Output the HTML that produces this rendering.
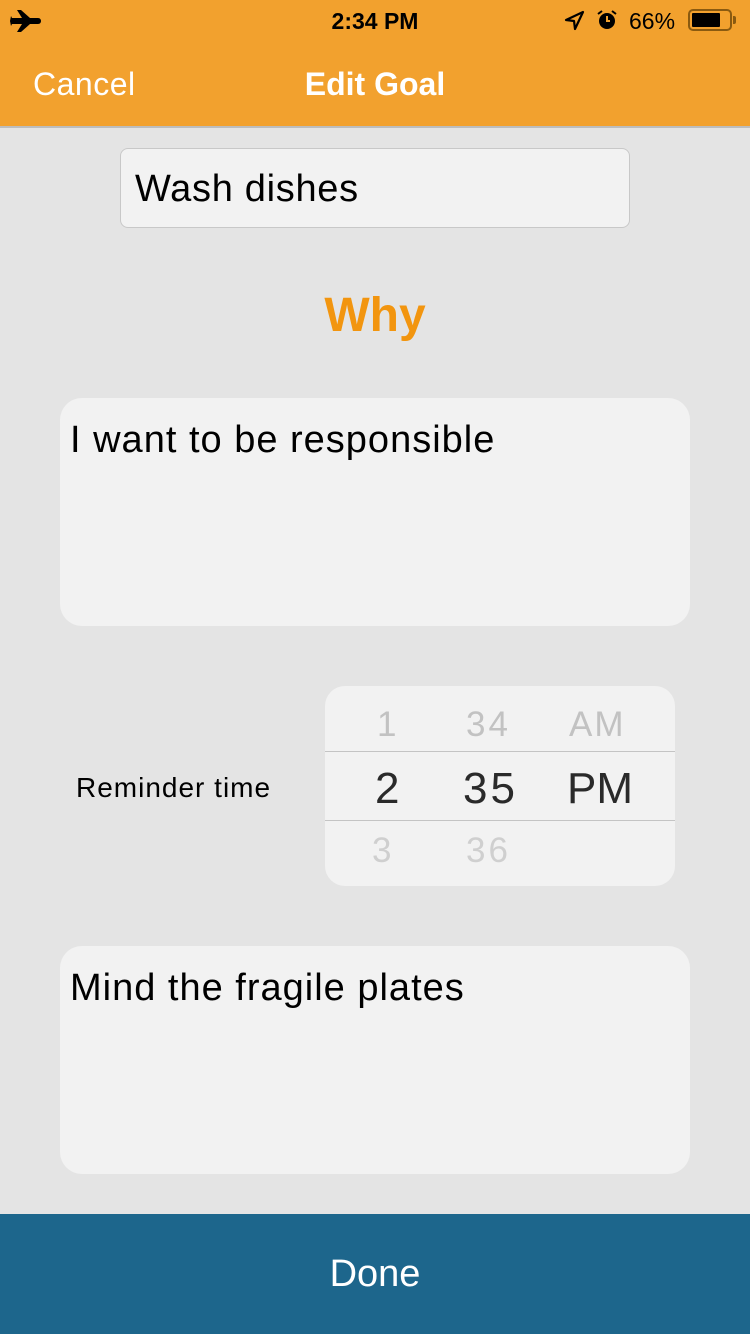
<!DOCTYPE html>
<html><head><meta charset="utf-8"><style>
*{margin:0;padding:0;box-sizing:border-box}
body{width:750px;height:1334px;background:#e4e4e4;font-family:"Liberation Sans",sans-serif;position:relative;overflow:hidden}
.abs{position:absolute}
.hdr{left:0;top:0;width:750px;height:128px;background:#f2a12e;border-bottom:2px solid #bdbdbd}
.box{background:#f2f2f2;border-radius:22px}
</style></head><body>
<div class="abs hdr">
  <svg class="abs" style="left:10px;top:8px" width="32" height="26" viewBox="0 0 32 26"><path d="M2 10h10L7 2h4l9 8h8c2 0 3 1.5 3 3s-1 3-3 3h-8l-9 8H7l5-8H2l-1 2-1-5 1-5z" fill="#000"/></svg>
  <div class="abs" style="left:0;width:750px;top:8px;text-align:center;font-size:23px;font-weight:bold;color:#000">2:34 PM</div>
  <svg class="abs" style="left:563px;top:10px" width="22" height="22" viewBox="0 0 22 22"><path d="M20 2L3 10l8 1 1 8z" fill="none" stroke="#000" stroke-width="2.2" stroke-linejoin="round"/></svg>
  <svg class="abs" style="left:596px;top:9px" width="22" height="22" viewBox="0 0 22 22"><circle cx="11" cy="12" r="8" fill="#000"/><path d="M11 7v5h3" stroke="#f2a12e" stroke-width="2" fill="none"/><path d="M2 5l4-3M20 5l-4-3" stroke="#000" stroke-width="2"/></svg>
  <div class="abs" style="left:629px;top:8px;font-size:23px;color:#000">66%</div>
  <div class="abs" style="left:688px;top:9px;width:44px;height:22px;border:2px solid #8a5a10;border-radius:5px"><div style="margin:2px;width:28px;height:14px;background:#000;border-radius:1px"></div></div>
  <div class="abs" style="left:733px;top:16px;width:3px;height:8px;background:#8a5a10;border-radius:0 2px 2px 0"></div>
  <div class="abs" style="left:33px;top:66px;font-size:32px;color:#fff;letter-spacing:0.5px">Cancel</div>
  <div class="abs" style="left:0;width:750px;top:66px;text-align:center;font-size:32px;font-weight:bold;color:#fff">Edit Goal</div>
</div>
<div class="abs" style="left:120px;top:148px;width:510px;height:80px;background:#f2f2f2;border:1px solid #c8c8c8;border-radius:8px;font-size:38px;padding:19px 0 0 14px;letter-spacing:0.7px">Wash dishes</div>
<div class="abs" style="left:0;width:750px;top:288px;text-align:center;font-size:48px;font-weight:bold;color:#f2950f">Why</div>
<div class="abs box" style="left:60px;top:398px;width:630px;height:228px;font-size:38px;padding:21px 0 0 10px;letter-spacing:1px">I want to be responsible</div>
<div class="abs" style="left:76px;top:772px;font-size:28px;letter-spacing:1px">Reminder time</div>
<div class="abs box" style="left:325px;top:686px;width:350px;height:200px;border-radius:20px">
  <div class="abs" style="left:0;top:65px;width:350px;height:1px;background:#c4c4c4"></div>
  <div class="abs" style="left:0;top:134px;width:350px;height:1px;background:#c4c4c4"></div>
  <div class="abs" style="left:52px;top:19px;font-size:35px;color:#c2c2c2">1</div>
  <div class="abs" style="left:141px;top:19px;font-size:35px;color:#c2c2c2;letter-spacing:3px">34</div>
  <div class="abs" style="left:244px;top:19px;font-size:35px;color:#c2c2c2;letter-spacing:2px">AM</div>
  <div class="abs" style="left:50px;top:78px;font-size:44px;color:#2a2a2a">2</div>
  <div class="abs" style="left:138px;top:78px;font-size:44px;color:#2a2a2a;letter-spacing:3px">35</div>
  <div class="abs" style="left:242px;top:78px;font-size:44px;color:#2a2a2a">PM</div>
  <div class="abs" style="left:47px;top:145px;font-size:35px;color:#cfcfcf">3</div>
  <div class="abs" style="left:141px;top:145px;font-size:35px;color:#cfcfcf;letter-spacing:3px">36</div>
</div>
<div class="abs box" style="left:60px;top:946px;width:630px;height:228px;font-size:38px;padding:21px 0 0 10px;letter-spacing:1px">Mind the fragile plates</div>
<div class="abs" style="left:0;top:1214px;width:750px;height:120px;background:#1d668c;color:#fff;font-size:38px;text-align:center;line-height:120px">Done</div>
</body></html>
